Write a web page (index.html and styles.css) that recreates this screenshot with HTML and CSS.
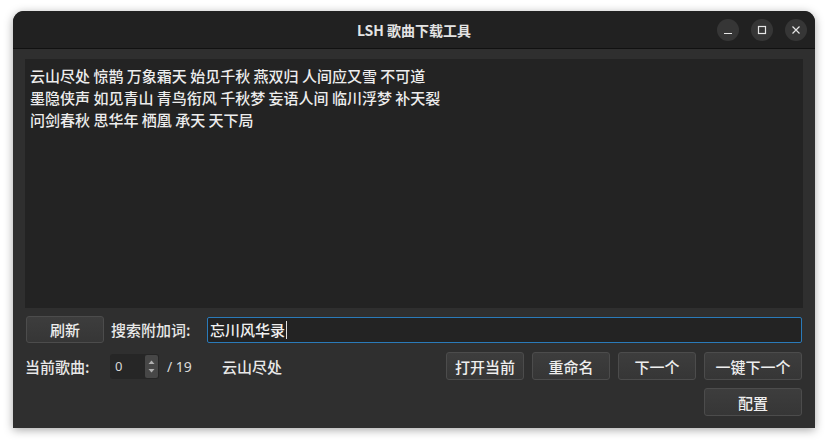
FILE: index.html
```html
<!DOCTYPE html>
<html lang="zh">
<head>
<meta charset="utf-8">
<title>LSH 歌曲下载工具</title>
<link rel="stylesheet" href="styles.css">
</head>
<body>
<div class="window">
  <div class="titlebar">
    <div class="title">LSH 歌曲下载工具</div>
    <div class="controls">
      <span class="ctl"><svg width="22" height="22" viewBox="0 0 22 22"><line x1="7" y1="14.5" x2="15" y2="14.5" stroke="#e6e6e6" stroke-width="1.2"/></svg></span>
      <span class="ctl"><svg width="22" height="22" viewBox="0 0 22 22"><rect x="7.5" y="7.5" width="7" height="7" fill="none" stroke="#e6e6e6" stroke-width="1.2"/></svg></span>
      <span class="ctl"><svg width="22" height="22" viewBox="0 0 22 22"><path d="M7.5 7.5 L14.5 14.5 M14.5 7.5 L7.5 14.5" stroke="#e6e6e6" stroke-width="1.2"/></svg></span>
    </div>
  </div>
  <div class="content">
    <div class="textarea">
      <div>云山尽处 惊鹊 万象霜天 始见千秋 燕双归 人间应又雪 不可道</div>
      <div>墨隐侠声 如见青山 青鸟衔风 千秋梦 妄语人间 临川浮梦 补天裂</div>
      <div>问剑春秋 思华年 栖凰 承天 天下局</div>
    </div>
    <div class="row row1">
      <button class="btn">刷新</button>
      <span class="label search-label">搜索附加词:</span>
      <div class="input">忘川风华录<span class="caret"></span></div>
    </div>
    <div class="row row2">
      <span class="label cur-label">当前歌曲:</span>
      <div class="spin">
        <span class="spin-val">0</span>
        <span class="spin-btns">
          <svg width="11" height="23" viewBox="0 0 11 23"><path d="M2.5 9 L5.5 5.5 L8.5 9 Z" fill="#b0b0b0"/><path d="M2.5 14 L5.5 17.5 L8.5 14 Z" fill="#b0b0b0"/></svg>
        </span>
      </div>
      <span class="total">/ 19</span>
      <span class="song">云山尽处</span>
      <span class="spacer"></span>
      <button class="btn">打开当前</button>
      <button class="btn">重命名</button>
      <button class="btn">下一个</button>
      <button class="btn wide">一键下一个</button>
    </div>
    <div class="row row3">
      <button class="btn wide">配置</button>
    </div>
  </div>
</div>
</body>
</html>
```
FILE: styles.css
```css
* { box-sizing: border-box; }
html, body {
  margin: 0;
  padding: 0;
  background: #ffffff;
  width: 828px;
  height: 445px;
  overflow: hidden;
  font-family: "Noto Sans CJK SC", "Noto Sans", sans-serif;
}
.window {
  margin: 11px 0 0 13px;
  width: 802px;
  height: 417px;
  background: #2f2f2f;
  border-radius: 11px 11px 0 0;
  display: flex;
  flex-direction: column;
  box-shadow: 0 2px 10px rgba(0,0,0,0.35);
  overflow: hidden;
}
.titlebar {
  height: 38px;
  flex: none;
  background: #212121;
  border-bottom: 1px solid #111111;
  display: flex;
  align-items: center;
  justify-content: center;
  position: relative;
}
.title {
  color: #e4e4e4;
  font-size: 14px;
  font-weight: bold;
}
.controls {
  position: absolute;
  right: 8px;
  top: 8px;
  display: flex;
  gap: 12px;
}
.ctl {
  width: 22px;
  height: 22px;
  border-radius: 50%;
  background: #363636;
  display: block;
}
.ctl svg { display: block; }
.content {
  flex: 1;
  padding: 10px 12px 12px 12px;
  display: flex;
  flex-direction: column;
}
.textarea {
  height: 249px;
  background: #232323;
  color: #ededed;
  font-size: 15px;
  font-weight: 500;
  line-height: 22px;
  padding: 6px 5px;
}
.row {
  display: flex;
  align-items: center;
  color: #e8e8e8;
  font-size: 15px;
  font-weight: 500;
  padding-right: 1px;
}
.row1 { margin-top: 8px; height: 27px; }
.row2 { margin-top: 9px; height: 28px; }
.row3 { margin-top: 8px; height: 28px; justify-content: flex-end; }
.btn {
  font-family: inherit;
  font-size: 15px;
  font-weight: 500;
  color: #eeeeee;
  width: 78px;
  height: 28px;
  border: 1px solid #4c4c4c;
  border-radius: 3px;
  background: linear-gradient(#3d3d3d, #363636);
  padding: 0;
  margin: 0;
}
.row1 .btn { margin-left: 1px; height: 27px; }
.btn.wide { width: 98px; }
.row2 .btn + .btn { margin-left: 8px; }
.search-label { margin-left: 7px; width: 96px; }
.input {
  flex: 1;
  height: 26px;
  border: 1px solid #2a7ab9;
  border-radius: 2px;
  background: #232323;
  color: #f0f0f0;
  font-size: 15px;
  padding: 0 2px;
  display: flex;
  align-items: center;
}
.caret {
  display: inline-block;
  width: 1px;
  height: 18px;
  background: #e0e0e0;
  margin-left: 1px;
}
.cur-label { width: 85px; }
.spin {
  width: 49px;
  height: 25px;
  background: #262626;
  border-radius: 3px;
  display: flex;
  align-items: center;
  justify-content: space-between;
  padding-left: 5px;
}
.spin-val { font-size: 13px; font-weight: 400; color: #d8d8d8; font-family: "Noto Sans", sans-serif; }
.spin-btns {
  width: 13px;
  height: 23px;
  margin-right: 1px;
  background: #474747;
  border-radius: 2px;
  display: flex;
  justify-content: center;
}
.spin-btns svg { display: block; }
.total { margin-left: 8px; font-size: 14px; font-weight: 400; font-family: "Noto Sans", sans-serif; color: #dadada; }
.song { margin-left: 30px; }
.spacer { flex: 1; }
```
